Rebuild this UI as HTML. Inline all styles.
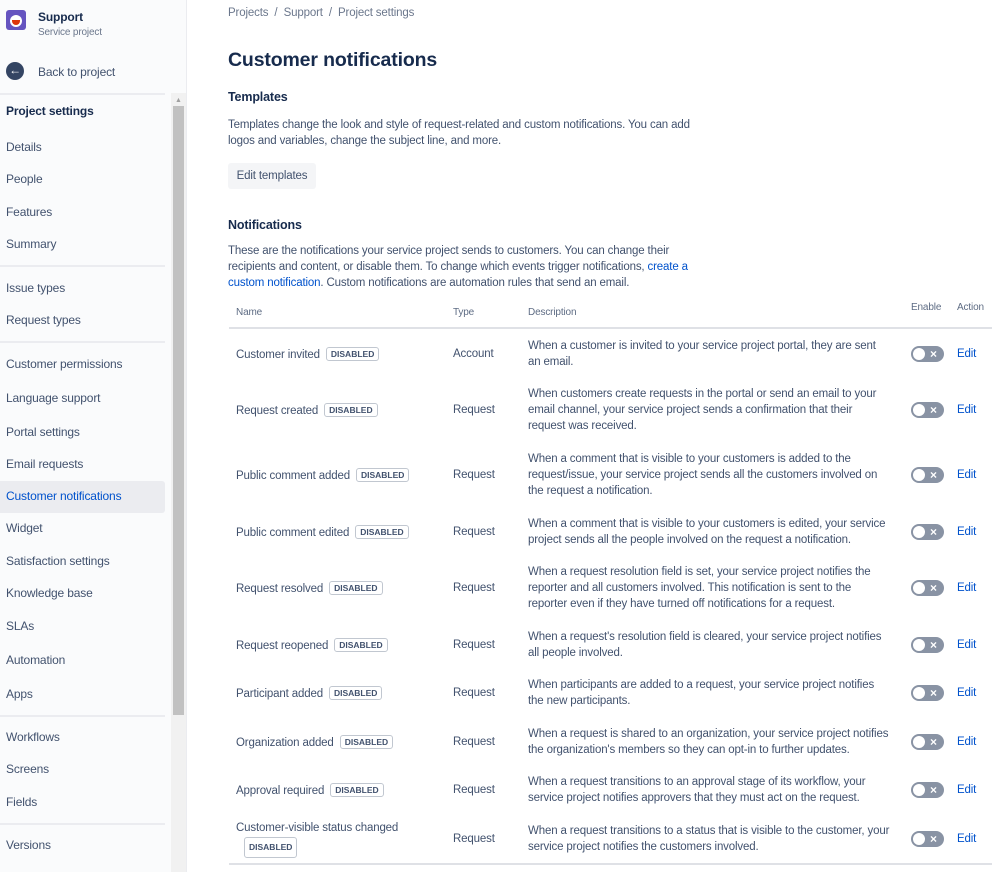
<!DOCTYPE html>
<html><head><meta charset="utf-8"><style>
*{margin:0;padding:0;box-sizing:border-box}
body{width:999px;height:872px;overflow:hidden;background:#fff;font-family:"Liberation Sans",sans-serif;color:#172b4d;position:relative;letter-spacing:-0.15px}
.a{position:absolute;white-space:nowrap}
#side{position:absolute;left:0;top:0;width:186px;height:872px;background:#fafbfc}
.si{position:absolute;left:6px;font-size:12px;color:#42526e;transform:translateY(-50%)}
.sep{position:absolute;left:0;width:165px;height:2px;background:#ebecf0}
.t{font-size:11.5px;color:#42526e}
.badge{display:inline-block;font-size:8.5px;font-weight:bold;color:#42526e;border:1px solid #c1c7d0;border-radius:3px;padding:1px 4px;margin-left:6px;vertical-align:1px;letter-spacing:0}
.row{position:absolute;left:229px;width:763px}
.row .n,.row .ty,.row .d,.row .tg,.row .e{position:absolute;transform:translateY(-50%);font-size:11.5px;color:#42526e}
.n{left:7px;white-space:nowrap}.ty{left:224px}.d{left:299px;width:362px;line-height:16px;white-space:normal}
.tg{left:682px;width:33px;height:16px;border-radius:8px;background:#8993a4}
.tg:before{content:"";position:absolute;left:2px;top:2px;width:12px;height:12px;border-radius:50%;background:#fff}
.tg:after{content:"×";position:absolute;left:19px;top:0;line-height:16px;color:#fff;font-size:12px;font-weight:bold}
.e{left:728px;color:#0052cc!important}
a{color:#0052cc;text-decoration:none}
</style></head><body>
<div id="side">
 <div class="a" style="left:6px;top:10px;width:20px;height:20px;border-radius:3px;background:#6554c0"></div>
 <div class="a" style="left:10px;top:15px;width:12px;height:12px;border-radius:50%;background:#fff"></div>
 <div class="a" style="left:12px;top:20px;width:8px;height:5px;border-radius:0 0 4px 4px;background:#de350b"></div>
 <div class="a" style="left:38px;top:10px;font-size:12px;font-weight:bold;color:#172b4d">Support</div>
 <div class="a" style="left:38px;top:27px;font-size:10px;color:#6b778c">Service project</div>
 <div class="a" style="left:6px;top:62px;width:18px;height:18px;border-radius:50%;background:#344563;color:#fff;font-size:12px;line-height:17px;text-align:center;font-weight:bold">←</div>
 <div class="a" style="left:38px;top:65px;font-size:12px;color:#42526e">Back to project</div>
 <div class="sep" style="top:93px"></div>
 <div class="si" style="top:111px;font-weight:bold;color:#172b4d">Project settings</div>
 <div class="si" style="top:147px">Details</div>
 <div class="si" style="top:179px">People</div>
 <div class="si" style="top:212px">Features</div>
 <div class="si" style="top:244px">Summary</div>
 <div class="sep" style="top:265px"></div>
 <div class="si" style="top:288px">Issue types</div>
 <div class="si" style="top:320px">Request types</div>
 <div class="sep" style="top:341px"></div>
 <div class="si" style="top:364px">Customer permissions</div>
 <div class="si" style="top:398px">Language support</div>
 <div class="si" style="top:432px">Portal settings</div>
 <div class="si" style="top:464px">Email requests</div>
 <div class="a" style="left:0;top:481px;width:165px;height:32px;background:#ebecf0;border-radius:0 3px 3px 0"></div>
 <div class="si" style="top:496px;color:#0052cc">Customer notifications</div>
 <div class="si" style="top:528px">Widget</div>
 <div class="si" style="top:561px">Satisfaction settings</div>
 <div class="si" style="top:593px">Knowledge base</div>
 <div class="si" style="top:626px">SLAs</div>
 <div class="si" style="top:660px">Automation</div>
 <div class="si" style="top:694px">Apps</div>
 <div class="sep" style="top:715px"></div>
 <div class="si" style="top:737px">Workflows</div>
 <div class="si" style="top:769px">Screens</div>
 <div class="si" style="top:802px">Fields</div>
 <div class="sep" style="top:823px"></div>
 <div class="si" style="top:845px">Versions</div>
 <div class="a" style="left:171px;top:93px;width:15px;height:779px;background:#f1f1f1"></div>
 <div class="a" style="left:175px;top:97px;font-size:7px;color:#a0a0a0">▲</div>
 <div class="a" style="left:173px;top:106px;width:11px;height:609px;background:#c1c1c1"></div>
</div>
<div class="a" style="left:186px;top:0;width:1px;height:872px;background:#ebecf0"></div>

<div class="a" style="left:228px;top:7px;font-size:11.5px;color:#6b778c">Projects &nbsp;/&nbsp; Support &nbsp;/&nbsp; Project settings</div>
<div class="a" style="left:228px;top:49px;font-size:19.5px;font-weight:bold;color:#172b4d">Customer notifications</div>
<div class="a" style="left:228px;top:90px;font-size:12.5px;font-weight:bold">Templates</div>
<div class="a t" style="left:228px;top:117px;line-height:16px;white-space:normal;width:480px">Templates change the look and style of request-related and custom notifications. You can add logos and variables, change the subject line, and more.</div>
<div class="a" style="left:228px;top:163px;width:88px;height:26px;background:#f4f5f7;border-radius:3px;font-size:11.5px;color:#42526e;line-height:26px;text-align:center">Edit templates</div>
<div class="a" style="left:228px;top:218px;font-size:12.5px;font-weight:bold">Notifications</div>
<div class="a t" style="left:228px;top:243px;line-height:16px;white-space:normal;width:480px">These are the notifications your service project sends to customers. You can change their recipients and content, or disable them. To change which events trigger notifications, <a>create a custom notification</a>. Custom notifications are automation rules that send an email.</div>

<div class="a" style="left:236px;top:307px;font-size:10px;color:#5e6c84">Name</div>
<div class="a" style="left:453px;top:307px;font-size:10px;color:#5e6c84">Type</div>
<div class="a" style="left:528px;top:307px;font-size:10px;color:#5e6c84">Description</div>
<div class="a" style="left:911px;top:302px;font-size:10px;color:#5e6c84">Enable</div>
<div class="a" style="left:957px;top:302px;font-size:10px;color:#5e6c84">Action</div>
<div class="a" style="left:229px;top:327px;width:763px;height:2px;background:#dfe1e6"></div>

<div class="row" style="top:354px"><div class="n">Customer invited<span class="badge">DISABLED</span></div><div class="ty">Account</div><div class="d">When a customer is invited to your service project portal, they are sent an email.</div><div class="tg"></div><div class="e">Edit</div></div>
<div class="row" style="top:410px"><div class="n">Request created<span class="badge">DISABLED</span></div><div class="ty">Request</div><div class="d">When customers create requests in the portal or send an email to your email channel, your service project sends a confirmation that their request was received.</div><div class="tg"></div><div class="e">Edit</div></div>
<div class="row" style="top:475px"><div class="n">Public comment added<span class="badge">DISABLED</span></div><div class="ty">Request</div><div class="d">When a comment that is visible to your customers is added to the request/issue, your service project sends all the customers involved on the request a notification.</div><div class="tg"></div><div class="e">Edit</div></div>
<div class="row" style="top:532px"><div class="n">Public comment edited<span class="badge">DISABLED</span></div><div class="ty">Request</div><div class="d">When a comment that is visible to your customers is edited, your service project sends all the people involved on the request a notification.</div><div class="tg"></div><div class="e">Edit</div></div>
<div class="row" style="top:588px"><div class="n">Request resolved<span class="badge">DISABLED</span></div><div class="ty">Request</div><div class="d">When a request resolution field is set, your service project notifies the reporter and all customers involved. This notification is sent to the reporter even if they have turned off notifications for a request.</div><div class="tg"></div><div class="e">Edit</div></div>
<div class="row" style="top:645px"><div class="n">Request reopened<span class="badge">DISABLED</span></div><div class="ty">Request</div><div class="d">When a request's resolution field is cleared, your service project notifies all people involved.</div><div class="tg"></div><div class="e">Edit</div></div>
<div class="row" style="top:693px"><div class="n">Participant added<span class="badge">DISABLED</span></div><div class="ty">Request</div><div class="d">When participants are added to a request, your service project notifies the new participants.</div><div class="tg"></div><div class="e">Edit</div></div>
<div class="row" style="top:742px"><div class="n">Organization added<span class="badge">DISABLED</span></div><div class="ty">Request</div><div class="d">When a request is shared to an organization, your service project notifies the organization's members so they can opt-in to further updates.</div><div class="tg"></div><div class="e">Edit</div></div>
<div class="row" style="top:790px"><div class="n">Approval required<span class="badge">DISABLED</span></div><div class="ty">Request</div><div class="d">When a request transitions to an approval stage of its workflow, your service project notifies approvers that they must act on the request.</div><div class="tg"></div><div class="e">Edit</div></div>
<div class="row" style="top:839px"><div class="n" style="line-height:17px">Customer-visible status changed<br><span class="badge" style="margin-left:8px">DISABLED</span></div><div class="ty">Request</div><div class="d">When a request transitions to a status that is visible to the customer, your service project notifies the customers involved.</div><div class="tg"></div><div class="e">Edit</div></div>
<div class="a" style="left:229px;top:863px;width:763px;height:2px;background:#dfe1e6"></div>
</body></html>
